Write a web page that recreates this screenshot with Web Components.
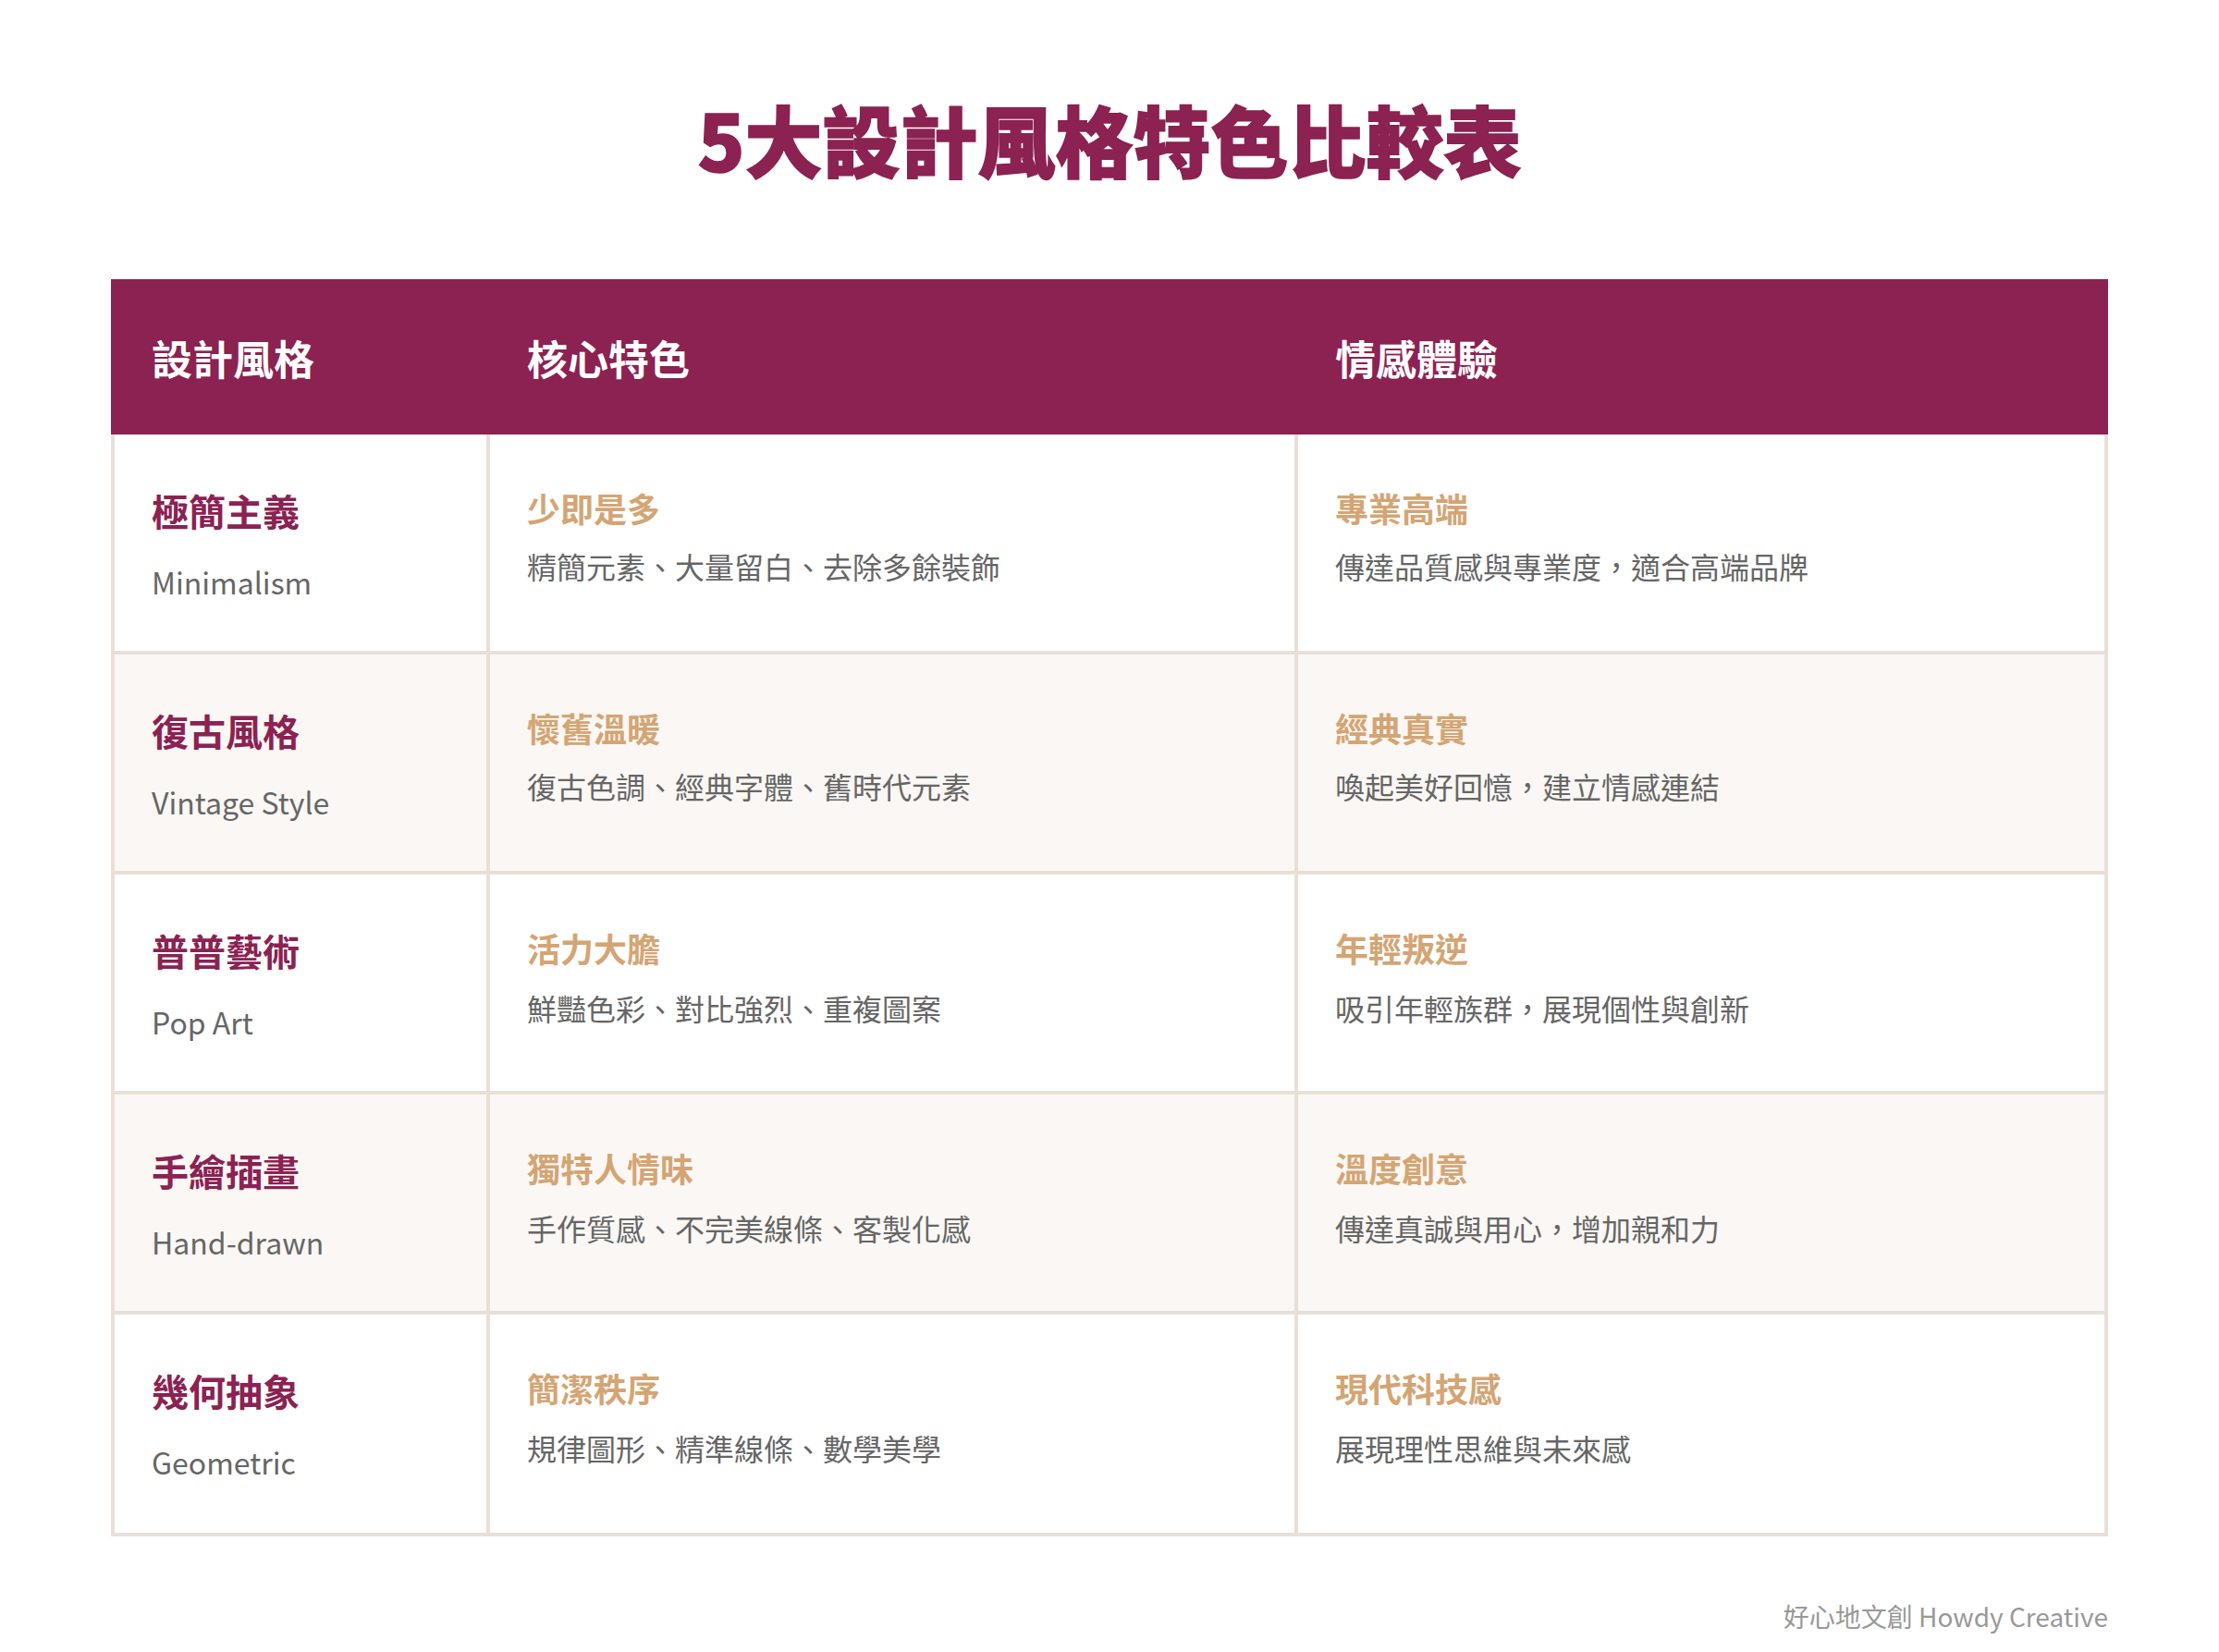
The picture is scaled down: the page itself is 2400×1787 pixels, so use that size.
<!DOCTYPE html>
<html lang="zh-Hant"><head><meta charset="utf-8"><title>5大設計風格特色比較表</title>
<style>
html,body{margin:0;background:#fff}
body{font-family:"Noto Sans CJK TC","Noto Sans",sans-serif}
</style></head><body>
<design-page>
<span slot="title">5大設計風格特色比較表</span>
<head-row><span>設計風格</span><span>核心特色</span><span>情感體驗</span></head-row>
<style-row name="極簡主義" en="Minimalism" a="少即是多" ad="精簡元素、大量留白、去除多餘裝飾" b="專業高端" bd="傳達品質感與專業度，適合高端品牌"></style-row>
<style-row alt name="復古風格" en="Vintage Style" a="懷舊溫暖" ad="復古色調、經典字體、舊時代元素" b="經典真實" bd="喚起美好回憶，建立情感連結"></style-row>
<style-row loose name="普普藝術" en="Pop Art" a="活力大膽" ad="鮮豔色彩、對比強烈、重複圖案" b="年輕叛逆" bd="吸引年輕族群，展現個性與創新"></style-row>
<style-row loose alt name="手繪插畫" en="Hand-drawn" a="獨特人情味" ad="手作質感、不完美線條、客製化感" b="溫度創意" bd="傳達真誠與用心，增加親和力"></style-row>
<style-row loose last name="幾何抽象" en="Geometric" a="簡潔秩序" ad="規律圖形、精準線條、數學美學" b="現代科技感" bd="展現理性思維與未來感"></style-row>
<span slot="foot">好心地文創 Howdy Creative</span>
</design-page>
<script>
const tpl = html => { const t = document.createElement('template'); t.innerHTML = html; return t; };
class DesignPage extends HTMLElement {
  constructor(){ super(); this.attachShadow({mode:'open'}).appendChild(DesignPage.t.content.cloneNode(true)); }
}
DesignPage.t = tpl(`<style>
:host{display:flex;flex-direction:column;width:2400px;height:1787px;box-sizing:border-box;padding:0 120px;font-family:"Noto Sans CJK TC","Noto Sans",sans-serif}
h1{margin:0;height:302px;box-sizing:border-box;padding-top:92px;text-align:center;font-size:84px;line-height:116px;font-weight:900;color:#8b2252;-webkit-text-stroke:1.5px #8b2252}
.table{display:flex;flex-direction:column}
footer{margin-top:66px;text-align:right;font-size:28px;line-height:40px;color:#999}
</style><h1><slot name="title"></slot></h1><div class="table"><slot></slot></div><footer><slot name="foot"></slot></footer>`);
class HeadRow extends HTMLElement {
  constructor(){ super(); this.attachShadow({mode:'open'}).appendChild(HeadRow.t.content.cloneNode(true)); }
}
HeadRow.t = tpl(`<style>
:host{display:grid;grid-template-columns:406px 874px 880px;height:168px;padding-top:2px;box-sizing:border-box;background:#8b2252;color:#fff;align-items:center;font-size:44px;font-weight:700}
::slotted(span){padding-left:44px}
</style><slot></slot>`);
class StyleRow extends HTMLElement {
  constructor(){
    super();
    const r = this.attachShadow({mode:'open'});
    r.appendChild(StyleRow.t.content.cloneNode(true));
    for (const k of ['name','en','a','ad','b','bd']) r.getElementById(k).textContent = this.getAttribute(k);
  }
}
StyleRow.t = tpl(`<style>
:host{--gap:0px;display:grid;grid-template-columns:402px 874px 876px;height:238px;box-sizing:border-box;border:solid #e8e0d8;border-width:0 4px 4px;background:#fff}
:host([alt]){background:#faf7f4}
:host([last]){height:240px}
:host([loose]){--gap:2px}
.c{box-sizing:border-box;padding:0 40px;border-left:4px solid #e8e0d8}
.c.first{border-left:0}
.name{margin:0;padding-top:44px;font-size:40px;line-height:77px;font-weight:700;color:#8b2252}
.en{margin:0;font-size:32px;line-height:76px;color:#666}
.t{margin:0;padding-top:47px;font-size:36px;line-height:64px;font-weight:700;color:#d4a574}
.d{margin:var(--gap) 0 0;font-size:32px;line-height:62px;color:#666}
</style>
<div class="c first"><p class="name" id="name"></p><p class="en" id="en"></p></div>
<div class="c"><p class="t" id="a"></p><p class="d" id="ad"></p></div>
<div class="c"><p class="t" id="b"></p><p class="d" id="bd"></p></div>`);
customElements.define('design-page', DesignPage);
customElements.define('head-row', HeadRow);
customElements.define('style-row', StyleRow);
</script>
</body></html>
